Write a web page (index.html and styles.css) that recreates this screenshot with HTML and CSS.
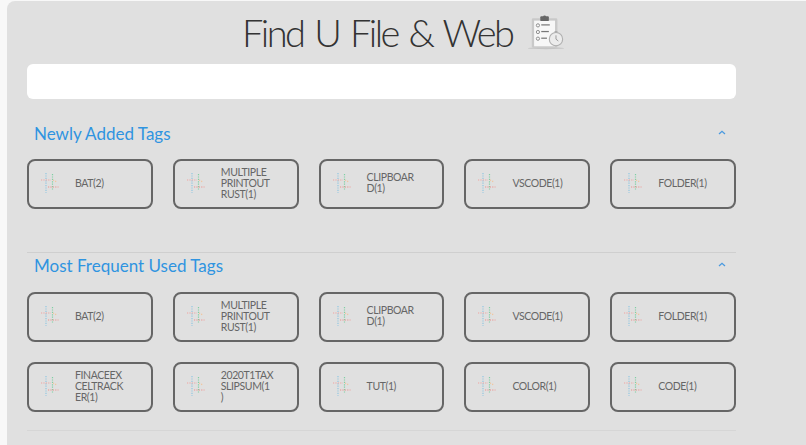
FILE: index.html
```html
<!DOCTYPE html>
<html lang="en">
<head>
<meta charset="utf-8">
<title>Find U File &amp; Web</title>
<link rel="stylesheet" href="styles.css">
</head>
<body>
<svg class="defs" width="0" height="0" aria-hidden="true">
  <symbol id="tag" viewBox="0 0 20 22">
    <g fill="none" stroke-width="1.200" stroke-dasharray="1.200 1.200">
      <path d="M6 1V21" stroke="#8fc6e2"/>
      <path d="M12.500 2V18" stroke="#7fcfa4"/>
      <path d="M1 8H11" stroke="#f0a3a0"/>
      <path d="M8 15H18.500" stroke="#ee8f8c"/>
      <path d="M13 8L17 10" stroke="#f2c49a"/>
    </g>
  </symbol>
</svg>
<main class="panel">
  <header class="title-row">
    <h1 class="title">Find U File &amp; Web</h1>
    <svg class="title-icon" viewBox="0 0 40 38" aria-hidden="true">
      <ellipse cx="20" cy="35.500" rx="19" ry="1" fill="#c4c4c4"/>
      <rect x="5" y="4" width="27" height="31" rx="1.500" fill="#c9c9c9"/>
      <rect x="7.500" y="6.500" width="22" height="27" fill="#f7f7f7"/>
      <rect x="14" y="2" width="9" height="5" rx="1" fill="#666"/>
      <circle cx="18.500" cy="2.500" r="1.500" fill="#666"/>
      <g fill="none" stroke="#8a8a8a" stroke-width="1">
        <circle cx="11.500" cy="11.500" r="1.700"/>
        <circle cx="11.500" cy="18.500" r="1.700"/>
        <circle cx="11.500" cy="25.500" r="1.700"/>
      </g>
      <g stroke="#777" stroke-width="1.300">
        <path d="M15 11H24"/>
        <path d="M15 18H23"/>
        <path d="M15 25H21"/>
      </g>
      <circle cx="30.500" cy="26" r="7" fill="#ececec" stroke="#b0b0b0" stroke-width="1.200"/>
      <path d="M30.500 22V26L33 28" fill="none" stroke="#999" stroke-width="1"/>
      <rect x="29" y="17.500" width="3" height="1.500" fill="#aaa"/>
    </svg>
  </header>
  <input class="search" type="text" aria-label="Search">

  <section class="section section-first">
    <div class="section-head">
      <h2 class="section-title">Newly Added Tags</h2>
      <svg class="chevron" viewBox="0 0 8 5" aria-hidden="true"><path d="M1 4L4 1.300L7 4" fill="none" stroke="#4a9ae0" stroke-width="1.300"/></svg>
    </div>
    <div class="tags">
      <a class="tag"><svg class="tag-icon"><use href="#tag"/></svg><span class="tag-text">BAT(2)</span></a>
      <a class="tag"><svg class="tag-icon"><use href="#tag"/></svg><span class="tag-text">MULTIPLE PRINTOUT RUST(1)</span></a>
      <a class="tag"><svg class="tag-icon"><use href="#tag"/></svg><span class="tag-text">CLIPBOAR<br>D(1)</span></a>
      <a class="tag"><svg class="tag-icon"><use href="#tag"/></svg><span class="tag-text">VSCODE(1)</span></a>
      <a class="tag"><svg class="tag-icon"><use href="#tag"/></svg><span class="tag-text">FOLDER(1)</span></a>
    </div>
  </section>

  <section class="section section-second">
    <div class="section-head">
      <h2 class="section-title">Most Frequent Used Tags</h2>
      <svg class="chevron" viewBox="0 0 8 5" aria-hidden="true"><path d="M1 4L4 1.300L7 4" fill="none" stroke="#4a9ae0" stroke-width="1.300"/></svg>
    </div>
    <div class="tags">
      <a class="tag"><svg class="tag-icon"><use href="#tag"/></svg><span class="tag-text">BAT(2)</span></a>
      <a class="tag"><svg class="tag-icon"><use href="#tag"/></svg><span class="tag-text">MULTIPLE PRINTOUT RUST(1)</span></a>
      <a class="tag"><svg class="tag-icon"><use href="#tag"/></svg><span class="tag-text">CLIPBOAR<br>D(1)</span></a>
      <a class="tag"><svg class="tag-icon"><use href="#tag"/></svg><span class="tag-text">VSCODE(1)</span></a>
      <a class="tag"><svg class="tag-icon"><use href="#tag"/></svg><span class="tag-text">FOLDER(1)</span></a>
      <a class="tag"><svg class="tag-icon"><use href="#tag"/></svg><span class="tag-text">FINACEEX<br>CELTRACK<br>ER(1)</span></a>
      <a class="tag"><svg class="tag-icon"><use href="#tag"/></svg><span class="tag-text">2020T1TAX<br>SLIPSUM(1<br>)</span></a>
      <a class="tag"><svg class="tag-icon"><use href="#tag"/></svg><span class="tag-text">TUT(1)</span></a>
      <a class="tag"><svg class="tag-icon"><use href="#tag"/></svg><span class="tag-text">COLOR(1)</span></a>
      <a class="tag"><svg class="tag-icon"><use href="#tag"/></svg><span class="tag-text">CODE(1)</span></a>
    </div>
  </section>
</main>
</body>
</html>
```
FILE: styles.css
```css
html, body {
  margin: 0;
  padding: 0;
  height: 100%;
  overflow: hidden;
  background: #f8f8f8;
}
.defs { display: block; height: 0; }
.panel {
  box-sizing: border-box;
  margin: 1px 0 0 7px;
  height: 444px;
  padding: 0 70px 0 20px;
  background: #e0e0e0;
  border-radius: 8px 0 0 0;
  font-family: "Lato", "Liberation Sans", sans-serif;
}
.title-row {
  display: flex;
  align-items: center;
  gap: 15px;
  height: 63px;
  padding-left: 215px;
}
.title {
  margin: 0;
  font-size: 38px;
  font-weight: 300;
  letter-spacing: -2.550px;
  word-spacing: 3px;
  line-height: 65px;
  color: #333;
  white-space: nowrap;
}
.title-icon { width: 38px; height: 37px; }
.search {
  display: block;
  box-sizing: border-box;
  width: 100%;
  height: 35px;
  padding: 0 10px;
  border: 0;
  border-radius: 6px;
  background: #fff;
}
.section { box-sizing: border-box; }
.section-first {
  padding-top: 22px;
  height: 154px;
  border-bottom: 1px solid #cfcfcf;
}
.section-second {
  height: 178px;
  border-bottom: 1px solid #d6d6d6;
}
.section-head {
  display: flex;
  justify-content: space-between;
  align-items: center;
  height: 24px;
  padding: 0 10px 0 7px;
}
.section-title {
  margin: 0;
  font-size: 17px;
  font-weight: 400;
  color: #2f94e0;
}
.chevron { width: 8px; height: 5px; margin-bottom: 2px; }
.tags {
  display: grid;
  grid-template-columns: repeat(5, 1fr);
  gap: 20px;
  margin-top: 14px;
}
.section-second .tags { margin-top: 15px; }
.tag {
  display: flex;
  align-items: center;
  box-sizing: border-box;
  height: 50px;
  padding: 0 8px 2px 11px;
  border: 2px solid #666;
  border-radius: 8px;
  color: #666;
}
.tag-icon {
  flex: none;
  width: 20px;
  height: 22px;
  margin-right: 15px;
}
.tag-text {
  width: 60px;
  font-size: 10.500px;
  letter-spacing: -0.400px;
  line-height: 11px;
}
```
